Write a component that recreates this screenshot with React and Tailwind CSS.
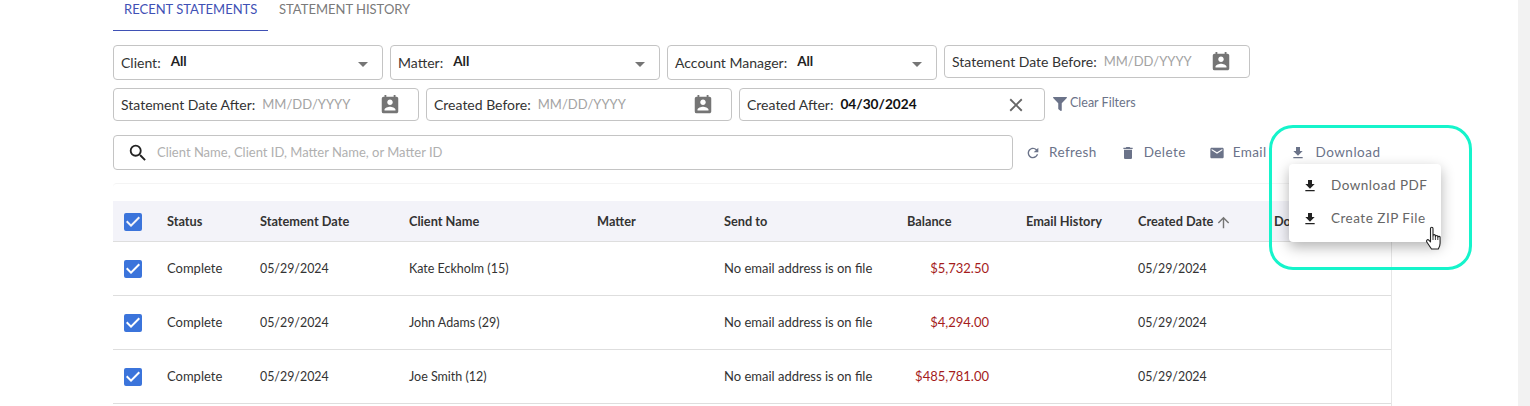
import React from 'react';
import { MdPermContactCalendar, MdFileDownload, MdRefresh, MdDelete, MdEmail, MdSearch, MdClose, MdArrowUpward, MdArrowDropDown, MdCheckBox } from 'react-icons/md';
import { FaFilter } from 'react-icons/fa';

const ROWS = [
  { client: 'Kate Eckholm (15)', balance: '$5,732.50' },
  { client: 'John Adams (29)', balance: '$4,294.00' },
  { client: 'Joe Smith (12)', balance: '$485,781.00' },
];

const COLS = 'grid grid-cols-[54px_93px_149px_188px_127px_183px_119px_112px_136px_117px] items-center';

function SelectFilter({ label, value }) {
  return (
    <div className="w-[270px] h-[35px] flex items-center border border-[#c4c4c4] rounded-[4px] pl-[7px] pr-[14px]">
      <span className="text-[14px] text-[#333]">{label}:</span>
      <span className="ml-[10px] text-[13.5px] font-bold text-[#222] -mt-[3px]">{value}</span>
      <MdArrowDropDown className="ml-auto mt-[3px] w-[24px] h-[24px] -mr-[7px] text-[#757575]" />
    </div>
  );
}

function DateFilter({ label, value, clearable }) {
  return (
    <div className="w-[306px] h-[33px] flex items-center border border-[#c4c4c4] rounded-[4px] pl-[7px] pr-[17px]">
      <span className="text-[14px] text-[#333]">{label}:</span>
      {value
        ? <span className="ml-[7px] text-[13.7px] font-bold text-[#111]">{value}</span>
        : <span className="ml-[7px] text-[13px] text-[#a3a3a3]">MM/DD/YYYY</span>}
      {clearable
        ? <MdClose className="ml-auto w-[22px] h-[22px] text-[#666]" />
        : <MdPermContactCalendar className="ml-auto w-[22px] h-[22px] text-[#757575]" />}
    </div>
  );
}

function Action({ icon: Icon, label }) {
  return (
    <div className="flex items-center text-[#6b7389] text-[13.5px] tracking-[0.4px]">
      <Icon className="w-[16px] h-[16px] mr-[8px]" />
      {label}
    </div>
  );
}

function Check() {
  return <MdCheckBox className="w-[24px] h-[24px] ml-[8px] text-[#3b74db]" />;
}

export default function App() {
  return (
    <div className="relative flex h-[406px] overflow-hidden bg-white" style={{ fontFamily: 'Lato, "Liberation Sans", sans-serif' }}>
      <div className="w-[1518px] pl-[113px]">
        {/* Tabs */}
        <div className="flex h-[31px] text-[13px]">
          <div className="w-[155px] pl-[11px] text-[#3f51b5] border-b border-[#3f51b5]">RECENT STATEMENTS</div>
          <div className="pl-[11px] text-[#7a7a7a]">STATEMENT HISTORY</div>
        </div>

        {/* Filters */}
        <div className="flex gap-[7px] mt-[14px]">
          <SelectFilter label="Client" value="All" />
          <SelectFilter label="Matter" value="All" />
          <SelectFilter label="Account Manager" value="All" />
          <DateFilter label="Statement Date Before" />
        </div>
        <div className="flex items-center gap-[7px] mt-[8px]">
          <DateFilter label="Statement Date After" />
          <DateFilter label="Created Before" />
          <DateFilter label="Created After" value="04/30/2024" clearable />
          <div className="flex items-center text-[12.5px] text-[#6b7389] ml-[1px] -mt-[2px]">
            <FaFilter className="w-[14px] h-[14px] mr-[3px]" />
            Clear Filters
          </div>
        </div>

        {/* Search + actions */}
        <div className="flex items-center mt-[14px]">
          <div className="w-[900px] h-[35px] flex items-center border border-[#c4c4c4] rounded-[4px] pl-[13px]">
            <MdSearch className="w-[22px] h-[22px] text-[#222]" />
            <span className="ml-[8px] text-[13px] text-[#b0b0b0]">Client Name, Client ID, Matter Name, or Matter ID</span>
          </div>
          <div className="flex items-center gap-[23px] ml-[12px]">
            <Action icon={MdRefresh} label="Refresh" />
            <Action icon={MdDelete} label="Delete" />
            <Action icon={MdEmail} label="Email" />
            <div className="flex items-center text-[#6b7389] text-[13.5px] tracking-[0.5px]">
              <MdFileDownload className="w-[16px] h-[16px] mr-[10px]" />
              Download
            </div>
          </div>
        </div>

        {/* Table */}
        <div className="w-[1279px] mt-[13px] pt-[17px] border-t border-[#f4f4f4] rounded-t-[4px]">
          <div className={`${COLS} h-[41px] pt-[2px] bg-[#f3f3f9] border-b border-[#dedede] text-[12.75px] font-bold text-[#333]`}>
            <Check />
            <div>Status</div>
            <div>Statement Date</div>
            <div>Client Name</div>
            <div>Matter</div>
            <div>Send to</div>
            <div>Balance</div>
            <div>Email History</div>
            <div className="flex items-center">
              Created Date
              <MdArrowUpward className="w-[17px] h-[17px] ml-[2px] text-[#757575]" />
            </div>
            <div>Download</div>
          </div>
          <div className="border-r border-[#e6e6e6] pb-[3px]">
            {ROWS.map(row => (
              <div key={row.client} className={`${COLS} h-[54px] border-b border-[#dedede] text-[13px] text-[#333]`}>
                <Check />
                <div>Complete</div>
                <div className="text-[12.4px] mt-[1px]">05/29/2024</div>
                <div className="text-[12.5px] mt-[1px]">{row.client}</div>
                <div />
                <div>No email address is on file</div>
                <div className="w-[82px] text-right text-[#a51c1c]">{row.balance}</div>
                <div />
                <div className="text-[12.4px] mt-[1px]">05/29/2024</div>
                <div />
              </div>
            ))}
          </div>
        </div>
      </div>
      <div className="w-[12px] bg-[#f2f2f2]" />

      {/* Highlight ring */}
      <div className="absolute left-[1269px] top-[125px] w-[203px] h-[145px] border-[3px] border-[#15f4cb] rounded-[24px] pointer-events-none" />

      {/* Download menu */}
      <div className="absolute left-[1289px] top-[164px] w-[152px] h-[78px] bg-white rounded-[4px] shadow-[0_5px_14px_rgba(0,0,0,0.3)] text-[13.5px] tracking-[0.5px] text-[#666]">
        <div className="flex items-center h-[33px] mt-[5px] pl-[13px]">
          <MdFileDownload className="w-[16px] h-[16px] mr-[13px] text-[#222]" />
          Download PDF
        </div>
        <div className="flex items-center h-[33px] pl-[13px]">
          <MdFileDownload className="w-[16px] h-[16px] mr-[13px] text-[#222]" />
          Create ZIP File
        </div>
      </div>

      {/* Cursor */}
      <svg className="absolute left-[1424px] top-[226px]" width="22" height="26" viewBox="0 0 22 26">
        <path d="M6.5 2.5c0-1.6 2.5-1.6 2.5 0v7.2c0-1.4 2.4-1.4 2.4 0v.8c0-1.3 2.4-1.3 2.4 0v.8c0-1.2 2.3-1.2 2.3 0v6c0 2.6-1 4.2-1.8 5.7H7.5L2.8 16c-1-1.5.7-3 2-1.9l1.7 1.7z" fill="#fff" stroke="#222" strokeWidth="1.1" strokeLinejoin="round" />
        <path d="M9 10v4M11.4 10.5V14M13.8 11.3V14" stroke="#222" strokeWidth="0.9" fill="none" />
      </svg>
    </div>
  );
}
